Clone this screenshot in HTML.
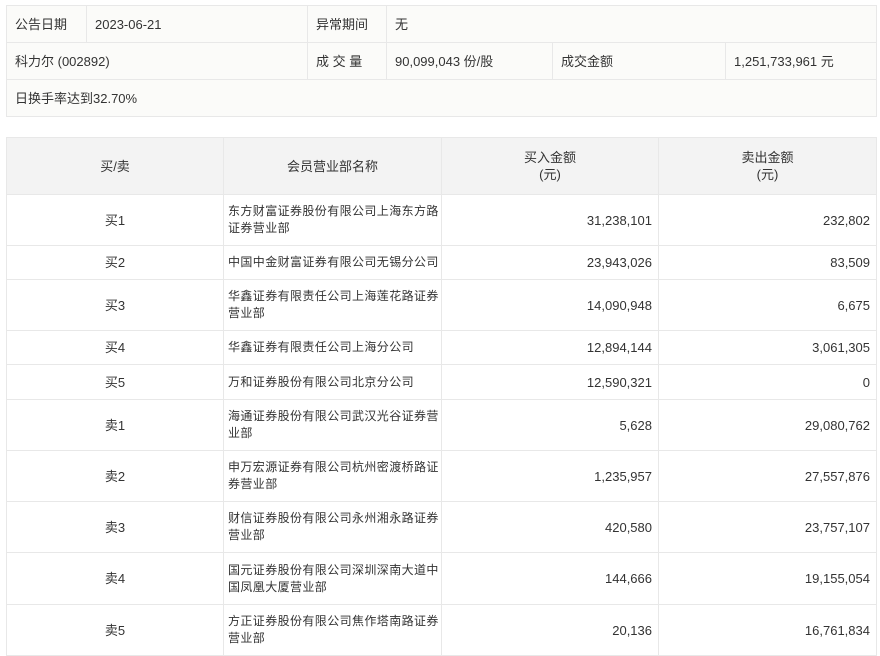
<!DOCTYPE html>
<html><head><meta charset="utf-8"><style>
body{margin:0;background:#fff;font-family:"Liberation Sans","Noto Sans CJK SC",sans-serif;font-size:13px;color:#333;}
table{border-collapse:collapse;position:absolute;left:6px;table-layout:fixed;}
td{border:1px solid #e8e8e8;padding:0 8px;line-height:17px;overflow:hidden;}
.info{top:5px;width:870px;background:#fbfbf9;}
.info td{height:36px;}
.main{top:137px;width:870px;}
.main th{background:#f3f3f3;font-weight:normal;border:1px solid #e8e8e8;height:56px;line-height:17px;padding:0;}
.c{text-align:center}.r{text-align:right;padding-right:6px}
.n{padding:0 0 0 4px;font-size:12px;letter-spacing:0.4px;}
</style></head><body>
<table class="info">
<colgroup><col style="width:80px"><col style="width:221px"><col style="width:79px"><col style="width:166px"><col style="width:173px"><col style="width:151px"></colgroup>
<tr><td>公告日期</td><td>2023-06-21</td><td>异常期间</td><td colspan="3">无</td></tr>
<tr><td colspan="2">科力尔 (002892)</td><td>成 交 量</td><td>90,099,043 份/股</td><td>成交金额</td><td>1,251,733,961 元</td></tr>
<tr><td colspan="6">日换手率达到32.70%</td></tr>
</table>
<table class="main">
<colgroup><col style="width:217px"><col style="width:218px"><col style="width:217px"><col style="width:218px"></colgroup>
<tr><th>买/卖</th><th>会员营业部名称</th><th>买入金额<br>(元)</th><th>卖出金额<br>(元)</th></tr>
<tr><td class="c" style="height:50px">买1</td><td class="n">东方财富证券股份有限公司上海东方路证券营业部</td><td class="r">31,238,101</td><td class="r">232,802</td></tr>
<tr><td class="c" style="height:33px">买2</td><td class="n">中国中金财富证券有限公司无锡分公司</td><td class="r">23,943,026</td><td class="r">83,509</td></tr>
<tr><td class="c" style="height:50px">买3</td><td class="n">华鑫证券有限责任公司上海莲花路证券营业部</td><td class="r">14,090,948</td><td class="r">6,675</td></tr>
<tr><td class="c" style="height:33px">买4</td><td class="n">华鑫证券有限责任公司上海分公司</td><td class="r">12,894,144</td><td class="r">3,061,305</td></tr>
<tr><td class="c" style="height:34px">买5</td><td class="n">万和证券股份有限公司北京分公司</td><td class="r">12,590,321</td><td class="r">0</td></tr>
<tr><td class="c" style="height:50px">卖1</td><td class="n">海通证券股份有限公司武汉光谷证券营业部</td><td class="r">5,628</td><td class="r">29,080,762</td></tr>
<tr><td class="c" style="height:50px">卖2</td><td class="n">申万宏源证券有限公司杭州密渡桥路证券营业部</td><td class="r">1,235,957</td><td class="r">27,557,876</td></tr>
<tr><td class="c" style="height:50px">卖3</td><td class="n">财信证券股份有限公司永州湘永路证券营业部</td><td class="r">420,580</td><td class="r">23,757,107</td></tr>
<tr><td class="c" style="height:51px">卖4</td><td class="n">国元证券股份有限公司深圳深南大道中国凤凰大厦营业部</td><td class="r">144,666</td><td class="r">19,155,054</td></tr>
<tr><td class="c" style="height:50px">卖5</td><td class="n">方正证券股份有限公司焦作塔南路证券营业部</td><td class="r">20,136</td><td class="r">16,761,834</td></tr>
</table>
</body></html>
